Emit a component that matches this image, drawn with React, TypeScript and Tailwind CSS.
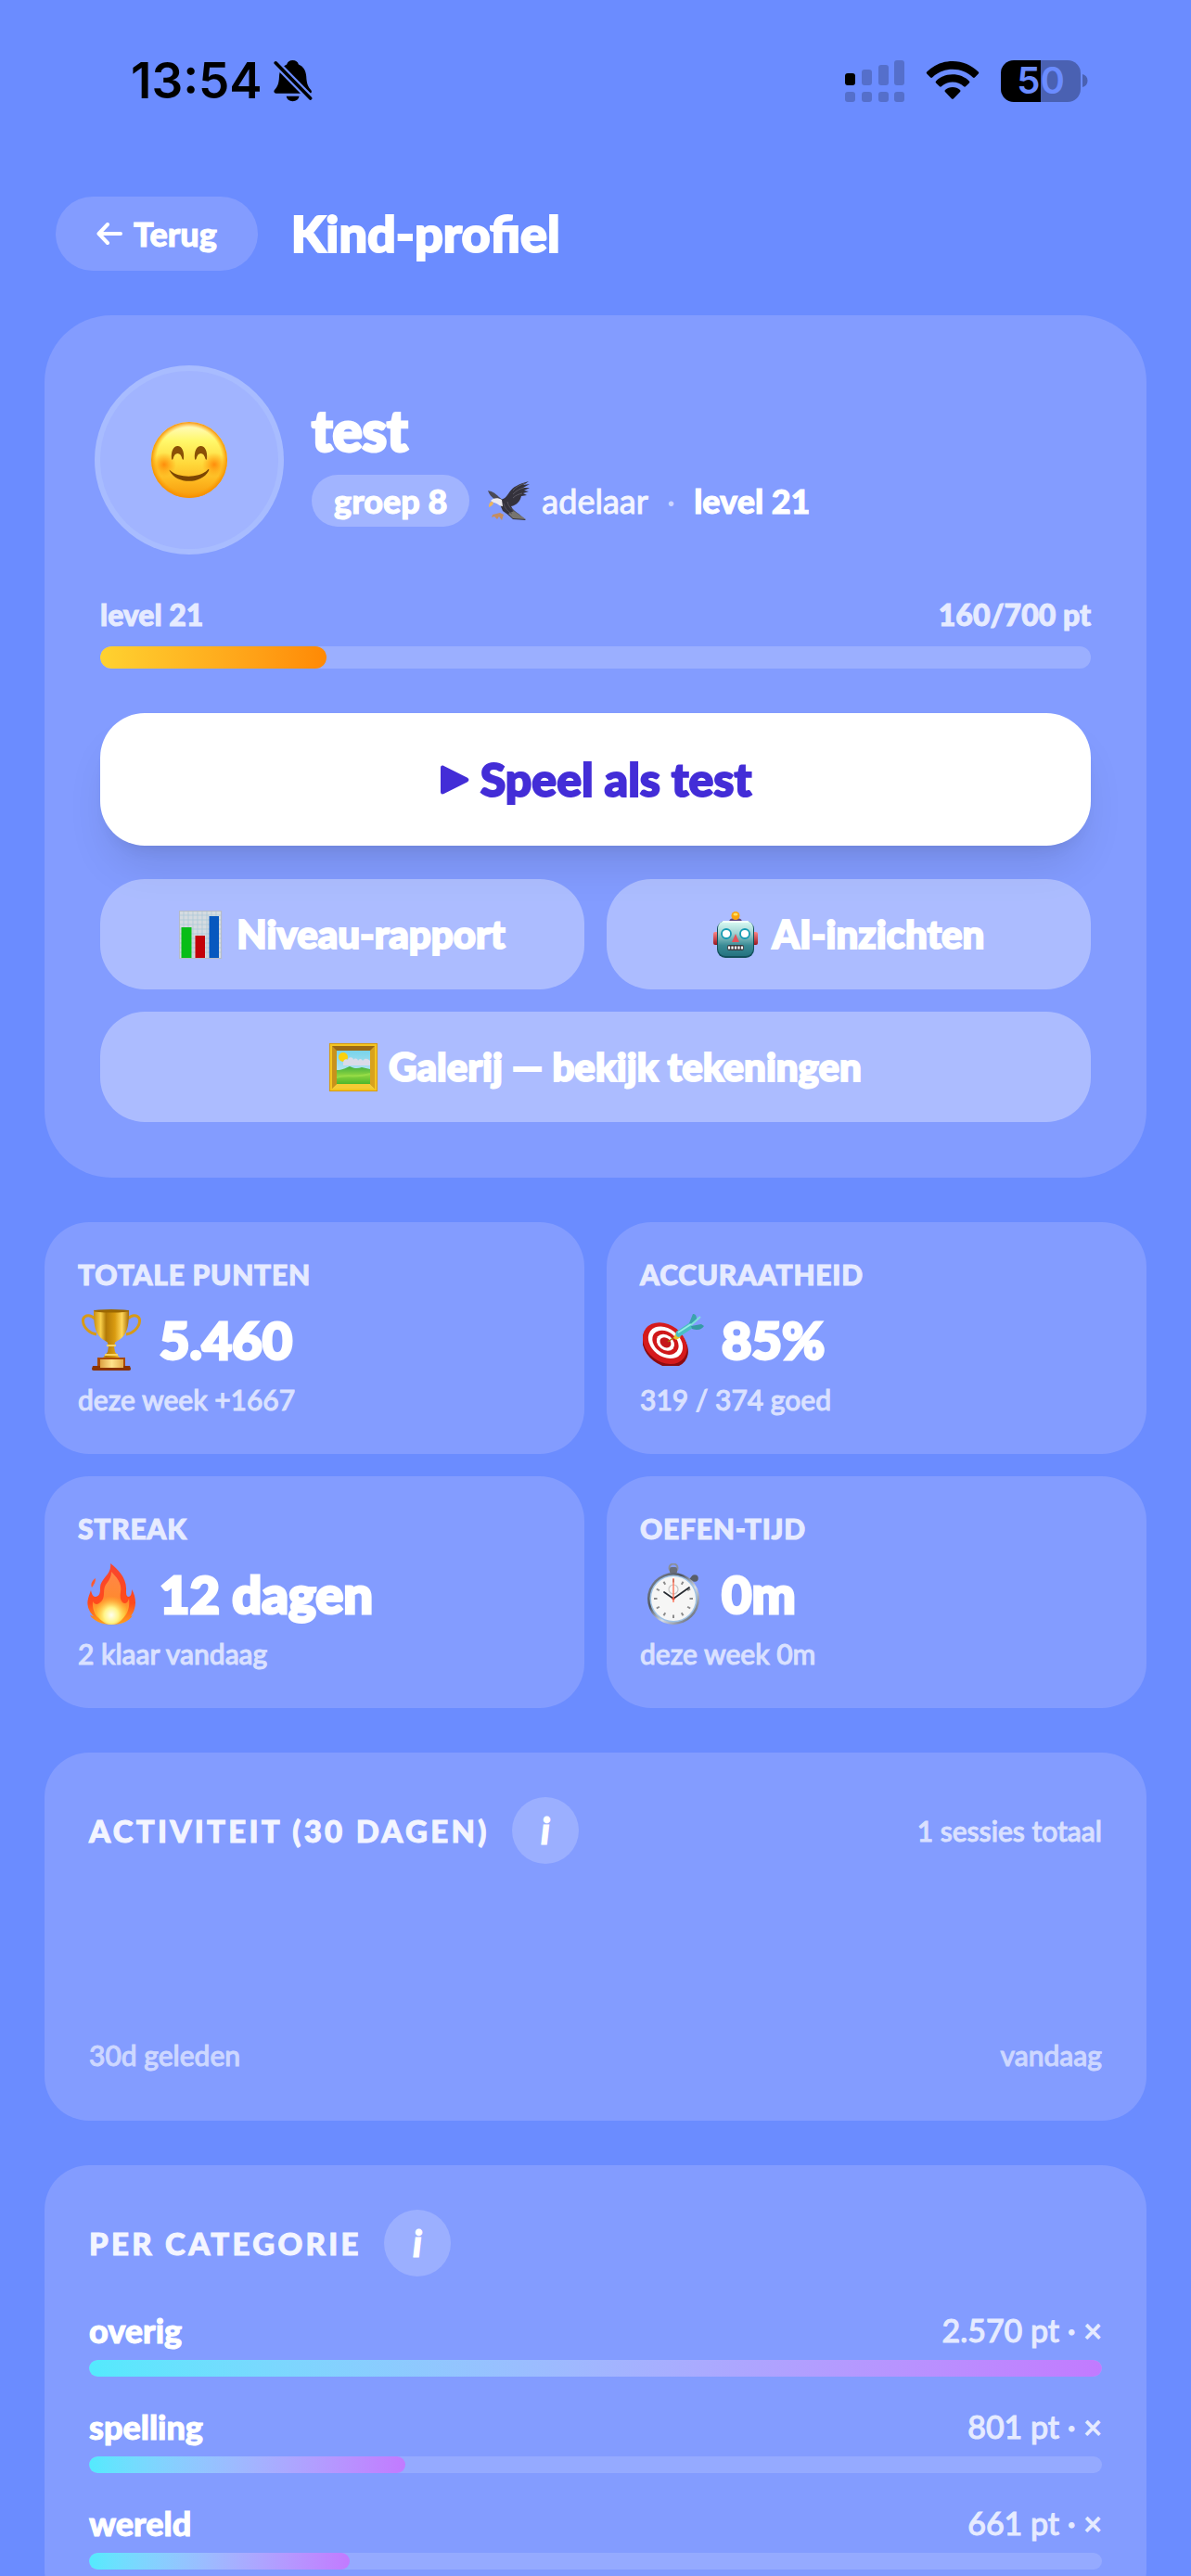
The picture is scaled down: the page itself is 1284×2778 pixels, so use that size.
import React from "react";

/* ---------- status bar icons ---------- */

function BellOff() {
  return (
    <svg viewBox="0 0 42 46" className="h-[46px] w-[42px]" aria-hidden="true">
      <path d="M20.500 1c3.400 0 5.600 1.800 6.400 4.400 5.300 2.200 8 7 8.300 12.800.4 8.300 2 11.600 5 14.700 1.500 1.700.6 3.900-1.700 3.900H2.800C.5 36.800-.4 34.600 1 32.900c3-3.100 4.700-6.400 5-14.700.3-5.800 3-10.600 8.200-12.800C15 2.800 17.200 1 20.500 1Z" />
      <path d="M13.700 39.800h13.800c-.6 3.400-3.200 5.400-6.900 5.400s-6.300-2-6.900-5.400Z" />
      <path d="M-2 -.5 44 46.500" stroke="#6b8cff" strokeWidth="8" />
      <path d="M2.200 3.800 39.600 42" stroke="#000" strokeWidth="3.600" strokeLinecap="round" />
    </svg>
  );
}

function Signal() {
  return (
    <svg viewBox="0 0 64 45" className="h-[45px] w-[64px]" aria-hidden="true">
      <rect x="0" y="14" width="11" height="13" rx="3" />
      <g opacity=".2">
        <rect x="18" y="10" width="11" height="17" rx="3" />
        <rect x="36" y="5" width="11" height="22" rx="3" />
        <rect x="53" y="0" width="11" height="27" rx="3" />
        <rect x="0" y="34" width="11" height="11" rx="3" />
        <rect x="18" y="34" width="11" height="11" rx="3" />
        <rect x="36" y="34" width="11" height="11" rx="3" />
        <rect x="53" y="34" width="11" height="11" rx="3" />
      </g>
    </svg>
  );
}

function Wifi() {
  return (
    <svg viewBox="0 0 58 42" className="h-[42px] w-[58px]" aria-hidden="true">
      <path d="M29 0c10.700 0 20.600 4.200 27.800 11.600.6.600.6 1.400 0 2l-3.900 3.900c-.6.600-1.400.6-2 0C45.200 11.800 37.400 8.800 29 8.800s-16.200 3-21.900 8.700c-.6.600-1.400.6-2 0l-3.900-3.900c-.6-.6-.6-1.400 0-2C8.400 4.200 18.300 0 29 0Z" />
      <path d="M29 14.300c6.900 0 13.200 2.600 17.900 7.100.6.600.6 1.400 0 2L43 27.300c-.6.600-1.300.6-1.900 0-3.200-3-7.400-4.700-12.100-4.700s-8.900 1.700-12.100 4.700c-.6.600-1.300.6-1.900 0l-3.900-3.900c-.6-.6-.6-1.400 0-2 4.700-4.500 11-7.100 17.900-7.100Z" />
      <path d="M29 28c3.100 0 5.900 1.100 8 3 .6.600.6 1.300.1 1.900l-7.200 7.500c-.6.600-1.300.6-1.900 0l-7.100-7.500c-.5-.6-.5-1.300.1-1.900 2.100-1.900 4.900-3 8-3Z" />
    </svg>
  );
}

function Battery() {
  return (
    <div className="flex items-center gap-[2px]" aria-label="Batterij 50%">
      <div className="flex h-[45px] w-[86px] items-center justify-center rounded-[14px] bg-[linear-gradient(90deg,#000_50%,#4a61b2_50%)] font-['Inter'] text-[40px] leading-none font-semibold">
        <span className="text-[#6b8cff]">50</span>
      </div>
      <svg viewBox="0 0 6 14" className="h-[14px] w-[6px]" aria-hidden="true">
        <path d="M0 0c3.500 1 5.500 3.500 5.500 7S3.500 13 0 14Z" fill="#4a61b2" />
      </svg>
    </div>
  );
}

/* ---------- emoji-style drawings ---------- */

function Smiley() {
  return (
    <svg viewBox="0 0 82 82" className="h-[82px] w-[82px]" aria-hidden="true">
      <defs>
        <linearGradient id="smFace" x1="0" y1="0" x2="0" y2="1">
          <stop offset="0" stopColor="#fffbd0" />
          <stop offset=".25" stopColor="#fff86a" />
          <stop offset=".55" stopColor="#ffd83a" />
          <stop offset=".8" stopColor="#fdb51e" />
          <stop offset="1" stopColor="#f59a0c" />
        </linearGradient>
        <radialGradient id="smRim">
          <stop offset=".86" stopColor="#f90" stopOpacity="0" />
          <stop offset="1" stopColor="#f48c00" stopOpacity=".95" />
        </radialGradient>
        <radialGradient id="smCheek">
          <stop offset="0" stopColor="#ff7a00" stopOpacity=".8" />
          <stop offset="1" stopColor="#ff8c00" stopOpacity="0" />
        </radialGradient>
      </defs>
      <circle cx="41" cy="41" r="41" fill="url(#smFace)" />
      <circle cx="41" cy="41" r="41" fill="url(#smRim)" />
      <circle cx="14" cy="46" r="13" fill="url(#smCheek)" />
      <circle cx="68" cy="46" r="13" fill="url(#smCheek)" />
      <path d="M22 40c-1-8 2-14 6.500-14S36 32 35 40c0 1-1 1-1.500 0-1-4-2.500-6-5-6s-4 2-5 6c-.5 1-1.500 1-1.500 0ZM47 40c-1-8 2-14 6.500-14S61 32 60 40c0 1-1 1-1.500 0-1-4-2.500-6-5-6s-4 2-5 6c-.5 1-1.500 1-1.500 0Z" fill="#8a5006" />
      <path d="M20 52c9 9 33 9 41.500-1 .8-.4 1 .3.600 1.500C55 67 28 68 20 53c-.5-1-.5-1.500 0-1Z" fill="#7c4603" />
    </svg>
  );
}

function Eagle() {
  return (
    <svg viewBox="0 0 46 43" className="h-[43px] w-[46px]" aria-hidden="true">
      <path d="M0 10c4 1 7 2 12 7l5 4-9-1C4 17 1 14 0 10Z" fill="#4b4a55" />
      <path d="M12 20c5 0 8-3 11-8C27 6 33 3 44 0c-2 2-5 3-6 4l7-1-7 4h7l-6 3 5 1-6 2 4 2-6 1c-1 5-5 10-11 11 2 4 5 6 8 8l8 7-14-1c-4-4-8-7-11-9l-3-7Z" fill="#34323c" />
      <path d="m28 32 13 9-14-1-5-5Z" fill="#77746f" />
      <path d="M27 10c3-4 8-6 13-8M27 14c4-4 7-6 12-7M27 18c3-3 6-4 10-5" stroke="#5b5964" fill="none" />
      <path d="M3 21c2-3 8-4 12-1l1 7c-4 0-6-4-10-4Z" fill="#eceaf0" />
      <path d="M5 22c-3 0-4 2-4 6 2-1 4-2 5-4Z" fill="#edb55a" />
      <path d="m13 34-8 2-1 3 3-1 3 3 2-3 3 4 2-6Z" fill="#c48d62" />
      <path d="M17 24c1 5 5 9 9 11M21 22c1 5 4 8 7 10" stroke="#56525b" fill="none" />
    </svg>
  );
}

function ChartIcon() {
  return (
    <svg viewBox="0 0 46 52" className="h-[52px] w-[46px]" aria-hidden="true">
      <rect width="46" height="52" fill="#d5dbe0" />
      <path d="M5 0v52M10 0v52M15 0v52M20 0v52M25 0v52M30 0v52M35 0v52M40 0v52M0 5h46M0 10h46M0 15h46M0 20h46M0 25h46M0 30h46M0 35h46M0 40h46M0 45h46" stroke="#a9c7d6" strokeWidth=".7" />
      <path d="M.5 0v52M45.500 0v52M0 .5h46M0 51.500h46" stroke="#b5bbc8" />
      <rect x="2.500" y="18" width="11" height="33" fill="#08bd18" />
      <rect x="17.500" y="27" width="10.500" height="24" fill="#c30208" />
      <rect x="32.500" y="6" width="10.500" height="45" fill="#0758bf" />
    </svg>
  );
}

function Robot() {
  return (
    <svg viewBox="0 0 48 50" className="h-[50px] w-[48px]" aria-hidden="true">
      <defs>
        <linearGradient id="rbHead" x1="0" y1="0" x2="0" y2="1">
          <stop offset="0" stopColor="#ddfdf6" />
          <stop offset=".35" stopColor="#a2d4d3" />
          <stop offset=".7" stopColor="#3a8b95" />
          <stop offset="1" stopColor="#24727f" />
        </linearGradient>
        <linearGradient id="rbEar" x1="0" y1="0" x2="0" y2="1">
          <stop offset="0" stopColor="#ff8585" />
          <stop offset="1" stopColor="#9a1720" />
        </linearGradient>
      </defs>
      <rect x="0" y="22" width="6" height="14" rx="2" fill="url(#rbEar)" />
      <rect x="42" y="22" width="6" height="14" rx="2" fill="url(#rbEar)" />
      <ellipse cx="24" cy="9.500" rx="6.500" ry="2.500" fill="#63477e" />
      <circle cx="24" cy="4.500" r="4.500" fill="#f9a410" />
      <ellipse cx="24" cy="3" rx="2.500" ry="1.500" fill="#ffe163" />
      <rect x="4" y="10" width="40" height="40" rx="9" fill="#12505c" />
      <rect x="5" y="10" width="38" height="38" rx="8" fill="url(#rbHead)" />
      <path d="M11 11h26" stroke="#f2fffb" strokeWidth="2" strokeLinecap="round" />
      <circle cx="14" cy="24" r="5" fill="#fff" stroke="#159bb4" strokeWidth="1.800" />
      <circle cx="34" cy="24" r="5" fill="#fff" stroke="#159bb4" strokeWidth="1.800" />
      <path d="m24 24 4 9h-8Z" fill="#e4545a" />
      <rect x="15" y="36" width="18" height="6" rx="2" fill="#3a3b40" />
      <path d="M17 37.500v3M20.500 37.500v3M24 37.500v3M27.500 37.500v3M31 37.500v3" stroke="#fff" strokeWidth="2.200" />
    </svg>
  );
}

function Frame() {
  return (
    <svg viewBox="0 0 52 52" className="h-[52px] w-[52px]" aria-hidden="true">
      <defs>
        <linearGradient id="frSky" x1="0" y1="0" x2="0" y2="1">
          <stop offset="0" stopColor="#78d3ea" />
          <stop offset="1" stopColor="#d9eef2" />
        </linearGradient>
        <linearGradient id="frGrass" x1="0" y1="0" x2="0" y2="1">
          <stop offset="0" stopColor="#3fae42" />
          <stop offset=".5" stopColor="#8ad43f" />
          <stop offset="1" stopColor="#4fb62c" />
        </linearGradient>
      </defs>
      <rect width="52" height="52" fill="#d69a14" />
      <rect x="1" y="1" width="50" height="50" fill="#f3c522" />
      <rect x="3" y="3" width="46" height="46" fill="#9c6a14" />
      <path d="m3 3 5 5v36l-5 5Z" fill="#c8921c" />
      <path d="m49 3-5 5v36l5 5Z" fill="#d8a21e" />
      <path d="m3 49 5-5h36l5 5Z" fill="#f5cc34" />
      <rect x="8" y="8" width="36" height="36" fill="url(#frSky)" />
      <circle cx="15" cy="15" r="5" fill="#fbd20c" />
      <path d="M15 21c0-3 3-5 5-3 1-4 6-3 6 0 2-3 5-1 5 1 2-3 4-2 5 0 3-4 6-2 8 0v5H15Z" fill="#dadbe8" />
      <path d="M8 29c6 0 9-2 14-4 4 2 8 3 13 1l9 2v16H8Z" fill="url(#frGrass)" />
      <path d="M8 37c9-4 20 1 36-4" fill="none" stroke="#9be04a" strokeWidth="2" opacity=".7" />
    </svg>
  );
}

function Trophy() {
  return (
    <svg viewBox="0 0 64 66" className="h-[66px] w-[64px]" aria-hidden="true">
      <defs>
        <linearGradient id="trCup">
          <stop offset="0" stopColor="#c98d10" />
          <stop offset=".2" stopColor="#f8cf4a" />
          <stop offset=".35" stopColor="#b27a07" />
          <stop offset=".6" stopColor="#d99b10" />
          <stop offset=".8" stopColor="#ffd75a" />
          <stop offset="1" stopColor="#a66b05" />
        </linearGradient>
        <linearGradient id="trPlate">
          <stop offset="0" stopColor="#dca243" />
          <stop offset=".5" stopColor="#ffe38b" />
          <stop offset="1" stopColor="#e4ad4c" />
        </linearGradient>
      </defs>
      <path d="M14 10C8 4 1 7 1.500 13 2 20 9 26 16 27M50 10c6-6 13-3 12.500 3C62 20 55 26 48 27" fill="none" stroke="#d79a17" strokeWidth="3" />
      <path d="M13 1h38c0 14-1 22-6 28-3 4-8 5-9 7l-1 4 1 6 5 6H23l5-6 1-6-1-4c-1-2-6-3-9-7-5-6-6-14-6-28Z" fill="url(#trCup)" />
      <ellipse cx="32" cy="1.800" rx="19" ry="1.800" fill="#9c6800" />
      <path d="M27 39h10M25 49h14" stroke="#f8d463" strokeWidth="2" />
      <path d="M17 52h30v10H17Z" fill="#a84a07" />
      <path d="M12 61h40l1 3c0 1-.5 2-2 2H13c-1.500 0-2-1-2-2Z" fill="#8b3303" />
      <rect x="20" y="54" width="25" height="9" fill="url(#trPlate)" />
    </svg>
  );
}

function Target() {
  return (
    <svg viewBox="0 0 66 56" className="h-[56px] w-[66px]" aria-hidden="true">
      <g transform="rotate(38 24 33)">
        <ellipse cx="25" cy="34" rx="27" ry="20.500" fill="#8c0b10" />
        <ellipse cx="23" cy="32" rx="26" ry="20" fill="#d51a1c" />
        <ellipse cx="23" cy="31" rx="20.500" ry="15" fill="#fff" />
        <ellipse cx="23" cy="31" rx="15.500" ry="11.500" fill="#d0181a" />
        <ellipse cx="23" cy="31" rx="10.500" ry="8" fill="#fff" />
        <ellipse cx="23" cy="31" rx="6.500" ry="5" fill="#c5161a" />
      </g>
      <path d="m27 30 10-7" stroke="#a66f08" strokeWidth="1.500" />
      <path d="m33 26 3-6 5 5-5 3Z" fill="#e9c22e" />
      <path d="M36 19 51 9l3 6-15 10c-3 0-4-3-3-6Z" fill="#48bfc3" />
      <path d="M50 10 54 0c3 0 4 2 4 6l-5 6Z" fill="#3aa3ad" />
      <path d="m52 13 11-2 3 2c-3 4-6 5-13 3Z" fill="#359aa5" />
      <path d="m52 12 10-9" stroke="#7ee0dc" strokeWidth="2" />
      <path d="m38 20 14-9" stroke="#93ece6" strokeWidth="2" />
    </svg>
  );
}

function Flame() {
  return (
    <svg viewBox="0 0 52 66" className="h-[66px] w-[52px]" aria-hidden="true">
      <defs>
        <linearGradient id="flOut" x1="0" y1="0" x2="0" y2="1">
          <stop offset="0" stopColor="#f8452f" />
          <stop offset=".65" stopColor="#ff4a1c" />
          <stop offset="1" stopColor="#ffa31a" />
        </linearGradient>
        <linearGradient id="flMid" x1="0" y1="0" x2="0" y2="1">
          <stop offset="0" stopColor="#ff8648" />
          <stop offset=".6" stopColor="#ff8a2c" />
          <stop offset="1" stopColor="#ffd52e" />
        </linearGradient>
        <radialGradient id="flCore" cx=".5" cy=".7" r=".6">
          <stop offset="0" stopColor="#fffff0" />
          <stop offset=".4" stopColor="#fff58a" />
          <stop offset="1" stopColor="#ffc62e" stopOpacity="0" />
        </radialGradient>
      </defs>
      <path d="M25 0c8 6 18 16 17 29 0 4 0 6 2 7 3 0 4-3 4-8 4 6 5 15 3 21-1 4-3 6-4 8l2-1c-4 7-13 10-23 10S7 62 3 56l4 1C2 52-1 45 1 38c1-4 2-6 3-9 1 4 2 7 5 7 5-1 5-5 5-10 0-10 13-14 11-26Z" fill="url(#flOut)" />
      <path d="M5 26c-2-4 1-8 4-10 0 4-1 6-4 10Z" fill="#ff5a30" />
      <path d="M26 9c5 5 12 12 10 22-1 5 0 11 4 12 3 0 4-2 5-5 2 14-6 26-19 26S5 54 6 41c2 3 4 4 7 2 8-5 3-14 7-20 3-4 6-8 6-14Z" fill="url(#flMid)" />
      <ellipse cx="26" cy="49" rx="16" ry="17" fill="url(#flCore)" />
    </svg>
  );
}

function Stopwatch() {
  const ticks = Array.from({ length: 12 }, (_, i) => i * 30);
  return (
    <svg viewBox="0 0 56 66" className="h-[66px] w-[56px]" aria-hidden="true">
      <defs>
        <linearGradient id="swRim" x1="0" y1="0" x2="1" y2="1">
          <stop offset="0" stopColor="#8b929e" />
          <stop offset=".35" stopColor="#4e545f" />
          <stop offset=".6" stopColor="#d5dce6" />
          <stop offset="1" stopColor="#3c4049" />
        </linearGradient>
      </defs>
      <circle cx="28" cy="5" r="4.500" fill="none" stroke="#8a8f99" strokeWidth="2" />
      <rect x="24" y="4" width="8" height="7" rx="2" fill="#696e79" />
      <path d="m45 19 4-4" stroke="#555b66" strokeWidth="3" />
      <circle cx="51" cy="16" r="3.800" fill="#585e69" />
      <circle cx="28" cy="38" r="28" fill="url(#swRim)" />
      <circle cx="28" cy="38" r="25.500" fill="#9fc3e6" />
      <circle cx="28" cy="38" r="24" fill="#f6f6f5" />
      {ticks.map((angle) => (
        <path key={angle} d="M28 17v3.500" stroke="#8b8b8b" strokeWidth="2" transform={`rotate(${angle} 28 38)`} />
      ))}
      <circle cx="28" cy="28" r="5" fill="none" stroke="#c6c6c6" strokeWidth="1.200" />
      <path d="M28 38 18 31M28 38l17-12" stroke="#262a30" strokeWidth="1.700" strokeLinecap="round" />
      <path d="M28 16v26" stroke="#ff6a4d" strokeWidth="1.300" />
      <circle cx="28" cy="38" r="1.600" fill="#e0503a" />
    </svg>
  );
}

/* ---------- building blocks ---------- */

function Stat({ label, icon, value, sub }: { label: string; icon: React.ReactNode; value: string; sub: string }) {
  return (
    <div className="rounded-[48px] bg-[#839cff] px-9 pt-[34px] pb-9">
      <h3 className="text-[30px] leading-[45px] font-black tracking-wide text-[#e6ebff] uppercase [-webkit-text-stroke:1px]">{label}</h3>
      <div className="mt-3 flex h-[72px] items-center gap-4">
        <span className="flex w-[72px] justify-center">{icon}</span>
        <span className="text-[56px] leading-[72px] font-black [-webkit-text-stroke:3px]">{value}</span>
      </div>
      <p className="mt-1.5 text-[30px] leading-[45px] font-medium text-[#dae1ff] [-webkit-text-stroke:1px]">{sub}</p>
    </div>
  );
}

function SectionTitle({ children }: { children: string }) {
  return (
    <div className="flex items-center gap-6">
      <h2 className="text-[33px] leading-[48px] font-black tracking-widest text-[#f3f5ff] uppercase [-webkit-text-stroke:1px]">{children}</h2>
      <button
        type="button"
        aria-label={`Uitleg over ${children}`}
        className="flex size-[72px] items-center justify-center rounded-full bg-[#9bafff] text-[39px] leading-none font-black italic [-webkit-text-stroke:1px]"
      >
        i
      </button>
    </div>
  );
}

const categories = [
  { name: "overig", points: "2.570", share: 100 },
  { name: "spelling", points: "801", share: 31.2 },
  { name: "wereld", points: "661", share: 25.7 },
];

export default function App() {
  return (
    <div className="h-screen overflow-hidden bg-[#6b8cff] font-['Lato',sans-serif] text-white">
      <div className="flex h-[174px] items-center justify-between pr-[111px] pl-[141px] text-black">
        <div className="flex items-center gap-3">
          <span className="font-['Inter',sans-serif] text-[53px] leading-none font-semibold">13:54</span>
          <BellOff />
        </div>
        <div className="flex items-center gap-[23px]">
          <Signal />
          <Wifi />
          <Battery />
        </div>
      </div>

      <main className="flex flex-col gap-12 px-12 pt-[38px]">
        <header className="flex items-center gap-9 px-3">
          <button type="button" className="flex h-20 items-center gap-3 rounded-full bg-[#839cff] px-11 text-[36px] font-black [-webkit-text-stroke:1px]">
            <svg viewBox="0 0 28 24" className="h-6 w-7" fill="none" stroke="currentColor" strokeWidth="4" strokeLinecap="round" strokeLinejoin="round" aria-hidden="true">
              <path d="M26 12H3M12 2 2.500 12 12 22" />
            </svg>
            Terug
          </button>
          <h1 className="text-[54px] leading-[72px] font-black [-webkit-text-stroke:2px]">Kind-profiel</h1>
        </header>

        <section className="rounded-[72px] bg-[#839cff] p-[60px]">
          <div className="flex items-center gap-9">
            <div className="flex size-48 shrink-0 items-center justify-center rounded-full bg-[#a1b4ff] ring-6 ring-[#a8bcff]">
              <Smiley />
            </div>
            <div className="flex flex-col gap-2">
              <h2 className="text-[60px] leading-[80px] font-black [-webkit-text-stroke:3px]">test</h2>
              <div className="flex h-14 items-center text-[36px]">
                <span className="rounded-full bg-[#a1b4ff] px-6 leading-[56px] font-black [-webkit-text-stroke:1px]">groep 8</span>
                <span className="ml-5 flex items-center gap-3 text-[#f3f5ff] [-webkit-text-stroke:1px]">
                  <Eagle />
                  adelaar
                </span>
                <span className="mx-5 text-white/60">·</span>
                <span className="font-black [-webkit-text-stroke:1px]">level 21</span>
              </div>
            </div>
          </div>

          <div className="mt-12 mb-3 flex justify-between text-[32px] leading-[45px] font-black text-[#e6ebff] [-webkit-text-stroke:1px]">
            <span>level 21</span>
            <span>160/700 pt</span>
          </div>
          <div className="h-6 overflow-hidden rounded-full bg-[#9bafff]">
            <div className="h-full rounded-full bg-linear-to-r from-[#ffd230] to-[#ff8904]" style={{ width: `${(160 / 700) * 100}%` }} />
          </div>

          <button
            type="button"
            className="mt-12 flex h-[143px] w-full items-center justify-center gap-3 rounded-[48px] bg-white text-[50px] font-black text-[#432dd7] shadow-[0_30px_45px_-9px_rgba(0,0,0,0.1),0_12px_18px_-12px_rgba(0,0,0,0.1)] [-webkit-text-stroke:2px]"
          >
            <svg viewBox="0 0 32 32" className="size-8" fill="currentColor" aria-hidden="true">
              <path d="M1 3C1 .8 2.600 0 4.500 1l25 12.500c2.500 1.400 2.500 3.600 0 5L4.500 31C2.600 32 1 31.200 1 29Z" />
            </svg>
            Speel als test
          </button>

          <div className="mt-9 grid grid-cols-2 gap-6 text-[42px] font-black [-webkit-text-stroke:2px]">
            <button type="button" className="flex h-[119px] items-center justify-center gap-4 rounded-[48px] bg-white/33">
              <ChartIcon />
              Niveau-rapport
            </button>
            <button type="button" className="flex h-[119px] items-center justify-center gap-4 rounded-[48px] bg-white/33">
              <Robot />
              AI-inzichten
            </button>
            <button type="button" className="col-span-2 flex h-[119px] items-center justify-center gap-3 rounded-[48px] bg-white/33">
              <Frame />
              Galerij — bekijk tekeningen
            </button>
          </div>
        </section>

        <section className="grid grid-cols-2 gap-6">
          <Stat label="Totale punten" icon={<Trophy />} value="5.460" sub="deze week +1667" />
          <Stat label="Accuraatheid" icon={<Target />} value="85%" sub="319 / 374 goed" />
          <Stat label="Streak" icon={<Flame />} value="12 dagen" sub="2 klaar vandaag" />
          <Stat label="Oefen-tijd" icon={<Stopwatch />} value="0m" sub="deze week 0m" />
        </section>

        <section className="rounded-[48px] bg-[#839cff] p-12">
          <div className="flex items-center justify-between">
            <SectionTitle>Activiteit (30 dagen)</SectionTitle>
            <span className="text-[30px] leading-[45px] font-medium text-[#dae1ff] [-webkit-text-stroke:1px]">1 sessies totaal</span>
          </div>
          <div className="mt-6 h-36" />
          <div className="mt-4 flex justify-between text-[30px] leading-[45px] font-medium text-[#cdd7ff] [-webkit-text-stroke:1px]">
            <span>30d geleden</span>
            <span>vandaag</span>
          </div>
        </section>

        <section className="rounded-[48px] bg-[#839cff] p-12">
          <SectionTitle>Per categorie</SectionTitle>
          <ul className="mt-9 flex flex-col gap-8">
            {categories.map((c) => (
              <li key={c.name}>
                <div className="flex items-center justify-between leading-[44px]">
                  <span className="text-[36px] font-black [-webkit-text-stroke:1px]">{c.name}</span>
                  <span className="text-[34px] font-medium text-[#e6ebff] [-webkit-text-stroke:1px]">{c.points} pt · ×</span>
                </div>
                <div className="mt-2.5 h-[18px] overflow-hidden rounded-full bg-[#95aaff]">
                  <div className="h-full rounded-full bg-linear-to-r from-[#53eafd] to-[#c27aff]" style={{ width: `${c.share}%` }} />
                </div>
              </li>
            ))}
          </ul>
        </section>
      </main>
    </div>
  );
}
